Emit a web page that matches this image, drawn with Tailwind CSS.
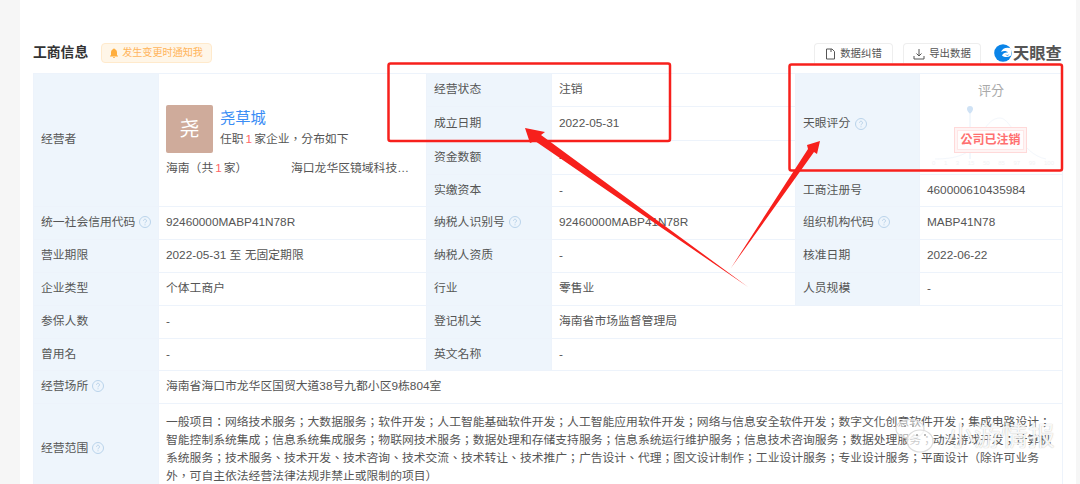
<!DOCTYPE html>
<html lang="zh-TW">
<head>
<meta charset="UTF-8" />
<script src="https://cdn.jsdelivr.net/npm/@tailwindcss/browser@4"></script>
<title>工商信息</title>
</head>
<body class="bg-[#f6f6f6] text-[#333] font-['Liberation_Sans','Noto_Sans_CJK_TC',sans-serif] text-[11.8px]">
<div class="relative w-[1080px] h-[484px] overflow-hidden">
  <div class="ml-5 w-[1056px] h-[484px] bg-white pl-[13px] pr-[13px] pt-[43px]">
    <!-- header -->
    <div class="flex items-center h-[20px] w-[1030px]">
      <h2 class="text-[13.8px] font-bold text-[#333] mr-[13px]">工商信息</h2>
      <div class="flex items-center h-[20px] w-[111px] px-[7px] gap-[3px] bg-[#fff6e8] border border-[#ffeacc] rounded-sm text-[#ffb55c] text-[10.100px] whitespace-nowrap">
        <svg class="w-[10px] h-[10px] shrink-0" viewBox="0 0 10 10"><path d="M5 .5a1 1 0 0 1 1 .8C7.400 1.800 8 3 8 4.500V7l1 1v.5H1V8l1-1V4.500C2 3 2.600 1.800 4 1.300A1 1 0 0 1 5 .5zM4 9h2a1 1 0 0 1-2 0z" fill="#ffae3d"/></svg>
        发生变更时通知我
      </div>
      <div class="ml-auto flex items-center">
        <div class="flex items-center justify-center gap-1 w-[79px] h-[20px] mr-[10px] border border-[#eee] border-b-0 rounded-t-sm text-[10.400px] text-[#555]">
          <svg class="w-[11px] h-[12px]" viewBox="0 0 11 12" fill="none" stroke="#555"><path d="M1.500 1h5.500l2.500 2.500V11h-8z M6 1v3"/></svg>
          数据纠错
        </div>
        <div class="flex items-center justify-center gap-1 w-[78px] h-[20px] mr-[13px] border border-[#eee] border-b-0 rounded-t-sm text-[10.400px] text-[#555]">
          <svg class="w-[12px] h-[12px]" viewBox="0 0 12 12" fill="none" stroke="#555"><path d="M6 1v7M3.500 5.500 6 8l2.500-2.500M1 8v3h10V8"/></svg>
          导出数据
        </div>
        <div class="flex items-center w-[69px] text-[16.300px] font-bold text-[#555] leading-none whitespace-nowrap">
          <svg class="w-[18px] h-[18px] mr-px shrink-0" viewBox="0 0 18 18"><circle cx="9" cy="9" r="8.800" fill="#0a84e8"/><path d="M18 5C14 2.500 8.500 3.500 7 8c2.500-1.500 5.500-1.500 7 .5-2.500-.5-5 .5-6 3 2.500 2 6 2 9 0z" fill="#fff"/><path d="M11 10.500c1.500.5 3 .5 4.500 0-1 1.500-3 1.500-4.500 0z" fill="#0a84e8"/></svg>
          天眼查
        </div>
      </div>
    </div>
    <!-- table -->
    <table class="mt-[10px] w-[1029px] table-fixed border-collapse text-[#555] [&_td]:border [&_td]:border-[#edf3fb] [&_td]:px-[7px] [&_td]:h-[33px] [&_td]:align-middle">
      <colgroup>
        <col class="w-[125px]"/><col class="w-[268px]"/><col class="w-[125px]"/><col class="w-[244px]"/><col class="w-[124px]"/><col class="w-[143px]"/>
      </colgroup>
      <tbody>
        <tr>
          <td rowspan="4" class="bg-[#eef5fc]">经营者</td>
          <td rowspan="4">
            <div class="flex items-center gap-[7px]">
              <div class="w-[47px] h-[48px] rounded-[2px] bg-[#cfab9b] text-white text-[20px] flex items-center justify-center">尧</div>
              <div>
                <div class="text-[15.300px] leading-[20px] text-[#3a8df5]">尧草城</div>
                <div class="leading-[20px] mt-px">任职<span class="mx-[2px] text-[#f66]">1</span>家企业，分布如下</div>
              </div>
            </div>
            <div class="flex mt-[7px] leading-[16px] whitespace-nowrap">
              <span class="w-[125px]">海南（共<span class="mx-[2px] text-[#f66]">1</span>家）</span>
              <span>海口龙华区镜域科技…</span>
            </div>
          </td>
          <td class="bg-[#eef5fc]">经营状态</td>
          <td>注销</td>
          <td rowspan="3" class="bg-[#eef5fc]">
            <span class="inline-flex items-center gap-[5px]">天眼评分
              <svg class="w-[12px] h-[12px]" viewBox="0 0 12 12" fill="none" stroke="#b9d3ea"><circle cx="6" cy="6" r="5.500"/><path d="M4.500 4.700a1.500 1.500 0 1 1 2.300 1.300c-.6.4-.8.700-.8 1.300M6 8.300v1"/></svg>
            </span>
          </td>
          <td rowspan="3" class="relative !p-0">
            <div class="absolute top-[7px] left-0 right-0 text-center text-[#aaa] text-[13px]">评分</div>
            <svg class="absolute left-[12px] top-[30px]" width="120" height="60" viewBox="0 0 120 60" fill="none">
              <path d="M3 55C25 55 36 50 44 40 50 30 56 14 68 14 80 14 88 50 114 55" stroke="#f3f7fc"/>
              <path d="M38 10v45" stroke="#e6f0f9"/>
              <path d="M38 2a3 3 0 0 1 3 3c0 2-3 5-3 5s-3-3-3-5a3 3 0 0 1 3-3z" fill="#cfe2f5"/>
            </svg>
            <div class="absolute left-[12px] right-[8px] top-[85px] flex justify-between text-[6px] text-[#f1f3f5]"><span>0</span><span>1</span><span>3</span><span>15</span><span>50</span><span>85</span><span>97</span><span>99</span><span>100</span></div>
            <div class="absolute left-[34px] top-[53px] w-[73px] h-[26px] p-[2px] border border-[#ffd9d9] bg-[#fff4f4]">
              <div class="h-full flex items-center justify-center bg-white/80 border border-[#ffe6e6] text-[#ff6f6f] font-bold text-[12px]">公司已注销</div>
            </div>
          </td>
        </tr>
        <tr class="[&_td]:h-[34px]!">
          <td class="bg-[#eef5fc]">成立日期</td>
          <td>2022-05-31</td>
        </tr>
        <tr class="[&_td]:h-[34px]!">
          <td class="bg-[#eef5fc]">资金数额</td>
          <td>-</td>
        </tr>
        <tr class="[&_td]:h-[32px]!">
          <td class="bg-[#eef5fc]">实缴资本</td>
          <td>-</td>
          <td class="bg-[#eef5fc]">工商注册号</td>
          <td>460000610435984</td>
        </tr>
        <tr>
          <td class="bg-[#eef5fc] whitespace-nowrap">统一社会信用代码
            <svg class="inline w-[12px] h-[12px] align-[-2px]" viewBox="0 0 12 12" fill="none" stroke="#b9d3ea"><circle cx="6" cy="6" r="5.500"/><path d="M4.500 4.700a1.500 1.500 0 1 1 2.300 1.300c-.6.4-.8.700-.8 1.300M6 8.300v1"/></svg>
          </td>
          <td>92460000MABP41N78R</td>
          <td class="bg-[#eef5fc] whitespace-nowrap">纳税人识别号
            <svg class="inline w-[12px] h-[12px] ml-[1px] align-[-2px]" viewBox="0 0 12 12" fill="none" stroke="#b9d3ea"><circle cx="6" cy="6" r="5.500"/><path d="M4.500 4.700a1.500 1.500 0 1 1 2.300 1.300c-.6.4-.8.700-.8 1.300M6 8.300v1"/></svg>
          </td>
          <td>92460000MABP41N78R</td>
          <td class="bg-[#eef5fc] whitespace-nowrap">组织机构代码
            <svg class="inline w-[12px] h-[12px] ml-[1px] align-[-2px]" viewBox="0 0 12 12" fill="none" stroke="#b9d3ea"><circle cx="6" cy="6" r="5.500"/><path d="M4.500 4.700a1.500 1.500 0 1 1 2.300 1.300c-.6.4-.8.700-.8 1.300M6 8.300v1"/></svg>
          </td>
          <td>MABP41N78</td>
        </tr>
        <tr>
          <td class="bg-[#eef5fc]">营业期限</td>
          <td>2022-05-31 至 无固定期限</td>
          <td class="bg-[#eef5fc]">纳税人资质</td>
          <td>-</td>
          <td class="bg-[#eef5fc]">核准日期</td>
          <td>2022-06-22</td>
        </tr>
        <tr>
          <td class="bg-[#eef5fc]">企业类型</td>
          <td>个体工商户</td>
          <td class="bg-[#eef5fc]">行业</td>
          <td>零售业</td>
          <td class="bg-[#eef5fc]">人员规模</td>
          <td>-</td>
        </tr>
        <tr>
          <td class="bg-[#eef5fc]">参保人数</td>
          <td>-</td>
          <td class="bg-[#eef5fc]">登记机关</td>
          <td colspan="3">海南省市场监督管理局</td>
        </tr>
        <tr class="[&_td]:h-[32px]!">
          <td class="bg-[#eef5fc]">曾用名</td>
          <td>-</td>
          <td class="bg-[#eef5fc]">英文名称</td>
          <td colspan="3">-</td>
        </tr>
        <tr>
          <td class="bg-[#eef5fc]">经营场所
            <svg class="inline w-[12px] h-[12px] ml-[1px] align-[-2px]" viewBox="0 0 12 12" fill="none" stroke="#b9d3ea"><circle cx="6" cy="6" r="5.500"/><path d="M4.500 4.700a1.500 1.500 0 1 1 2.300 1.300c-.6.4-.8.700-.8 1.300M6 8.300v1"/></svg>
          </td>
          <td colspan="5">海南省海口市龙华区国贸大道38号九都小区9栋804室</td>
        </tr>
        <tr>
          <td class="bg-[#eef5fc]">经营范围
            <svg class="inline w-[12px] h-[12px] ml-[1px] align-[-2px]" viewBox="0 0 12 12" fill="none" stroke="#b9d3ea"><circle cx="6" cy="6" r="5.500"/><path d="M4.500 4.700a1.500 1.500 0 1 1 2.300 1.300c-.6.4-.8.700-.8 1.300M6 8.300v1"/></svg>
          </td>
          <td colspan="5" class="!py-[9px] leading-[18px]">一般项目：网络技术服务；大数据服务；软件开发；人工智能基础软件开发；人工智能应用软件开发；网络与信息安全软件开发；数字文化创意软件开发；集成电路设计；<br/>智能控制系统集成；信息系统集成服务；物联网技术服务；数据处理和存储支持服务；信息系统运行维护服务；信息技术咨询服务；数据处理服务；动漫游戏开发；计算机<br/>系统服务；技术服务、技术开发、技术咨询、技术交流、技术转让、技术推广；广告设计、代理；图文设计制作；工业设计服务；专业设计服务；平面设计（除许可业务<br/>外，可自主依法经营法律法规非禁止或限制的项目）</td>
        </tr>
      </tbody>
    </table>
  </div>

  <!-- red annotations -->
  <svg class="absolute inset-0 pointer-events-none" width="1080" height="484" viewBox="0 0 1080 484" fill="none">
    <rect x="388.500" y="63.500" width="281.500" height="77.500" rx="2" stroke="#f7201c" stroke-width="2.500"/>
    <rect x="789.500" y="64.500" width="272.500" height="106" rx="2" stroke="#f7201c" stroke-width="2.500"/>
    <path d="M525 128 545 132 541 135 748 287 535 141 530 143z" fill="#f7201c"/>
    <path d="M820 141 817 154 814 152 731 268 808 149 807 145z" fill="#f7201c"/>
  </svg>

  <!-- watermark -->
  <div class="absolute left-[895px] top-[419px] flex items-center pointer-events-none text-white/90">
    <svg width="46" height="36" viewBox="0 0 46 36" fill="none" stroke="#dcdcdc" stroke-width="1.200">
      <ellipse cx="15" cy="10" rx="14" ry="9.500" fill="#fff" fill-opacity=".5"/><ellipse cx="25" cy="22" rx="13" ry="11" fill="#fff" fill-opacity=".7"/>
      <circle cx="10" cy="7" r=".8" fill="#777" stroke="none"/><circle cx="18" cy="7" r=".8" fill="#777" stroke="none"/>
      <circle cx="22" cy="16" r=".8" fill="#666" stroke="none"/><circle cx="30" cy="16" r=".8" fill="#666" stroke="none"/>
    </svg>
    <span class="text-[27px] leading-none ml-[6px] whitespace-nowrap [text-shadow:0_0_1px_rgba(110,110,110,.55)]">小游情报</span>
  </div>
</div>
</body>
</html>
